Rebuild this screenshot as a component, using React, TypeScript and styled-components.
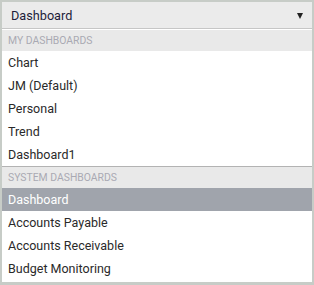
import React from "react";
import styled, { createGlobalStyle } from "styled-components";

const Global = createGlobalStyle`
  html, body { margin: 0; padding: 0; background: #ffffff; }
  body { font-family: Roboto, "Noto Sans", Arial, sans-serif; }
`;

const Frame = styled.div`
  box-sizing: border-box;
  width: 314px;
  height: 285px;
  border: 2px solid #c7ccc7;
  border-bottom-width: 3px;
  display: flex;
  flex-direction: column;
  background: #ffffff;
  overflow: hidden;
`;

const Header = styled.div`
  height: 26px;
  flex: none;
  background: #ebebeb;
  border-bottom: 1px solid #c6c6c6;
  display: flex;
  align-items: center;
  justify-content: space-between;
  padding: 0 9px 0 9px;
  font-size: 12.7px;
  color: #1d1d3a;
`;

const Caret = styled.span`
  width: 0;
  height: 0;
  border-left: 3.5px solid transparent;
  border-right: 3.5px solid transparent;
  border-top: 6px solid #222222;
  margin-top: 1px;
`;

const List = styled.div`
  margin-top: 1px;
  flex: 1;
  display: flex;
  flex-direction: column;
`;

const SectionHeader = styled.div<{ $divider?: boolean }>`
  flex: none;
  box-sizing: border-box;
  background: #e9e9e9;
  border-top: ${(p) => (p.$divider ? "1px solid #b3b3b3" : "none")};
  height: ${(p) => (p.$divider ? "22px" : "21px")};
  display: flex;
  align-items: center;
  padding-left: 6px;
  font-size: 10.4px;
  color: #a9a9b3;
  text-transform: uppercase;
`;

const Item = styled.div<{ $selected?: boolean }>`
  height: 23px;
  flex: none;
  display: flex;
  align-items: center;
  padding-left: 6px;
  font-size: 12.5px;
  color: ${(p) => (p.$selected ? "#ffffff" : "#2a2a2a")};
  background: ${(p) => (p.$selected ? "#a0a4ac" : "#ffffff")};
`;

const mine = ["Chart", "JM (Default)", "Personal", "Trend", "Dashboard1"];
const system = ["Dashboard", "Accounts Payable", "Accounts Receivable", "Budget Monitoring"];

export default function App() {
  return (
    <>
      <Global />
      <Frame>
        <Header>
          <span>Dashboard</span>
          <Caret />
        </Header>
        <List>
          <SectionHeader>My Dashboards</SectionHeader>
          {mine.map((m) => (
            <Item key={m}>{m}</Item>
          ))}
          <SectionHeader $divider>System Dashboards</SectionHeader>
          {system.map((s) => (
            <Item key={s} $selected={s === "Dashboard"}>
              {s}
            </Item>
          ))}
        </List>
      </Frame>
    </>
  );
}
